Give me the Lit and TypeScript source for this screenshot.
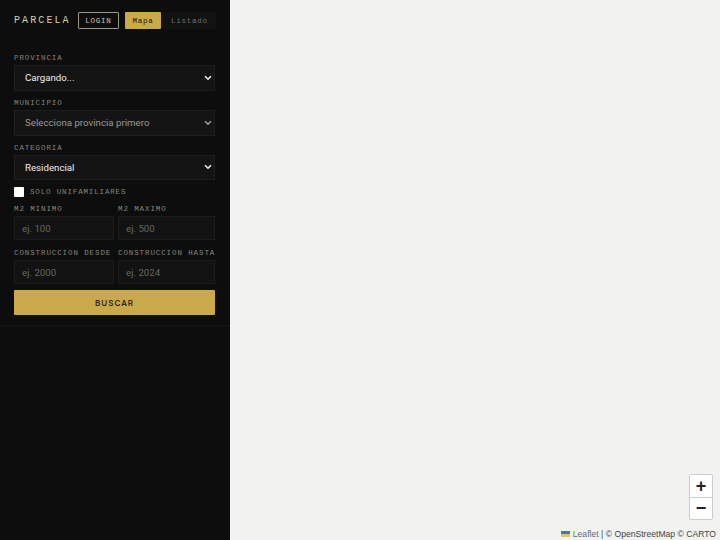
import { LitElement, html, css } from "lit";
import { customElement } from "lit/decorators.js";

@customElement("app-root")
export class AppRoot extends LitElement {
  static styles = css`
    :host { display: flex; width: 720px; height: 540px; overflow: hidden; background: #f2f2f0; }
    * { box-sizing: border-box; }
    .side { width: 230px; height: 540px; background: #0d0d0d; flex: none; display: flex; flex-direction: column; }
    .form { padding: 12px 15px 10px 14px; border-bottom: 1px solid #161616; height: 326px; display: flex; flex-direction: column; }
    .head { display: flex; align-items: center; height: 17px; margin-bottom: 25px; }
    .logo { font: 10px "Liberation Mono", monospace; letter-spacing: 2.1px; color: #d6cda6; width: 64px; flex: none; white-space: nowrap; }
    .btn { height: 17px; display: flex; align-items: center; justify-content: center; font: 7.5px "Liberation Mono", monospace; letter-spacing: .75px; flex: none; }
    .login { width: 41px; border: 1px solid #9a9684; color: #cfc9b0; border-radius: 1px; margin-right: 6px; }
    .mapa { width: 36px; background: #c9a94a; color: #17130a; border-radius: 1px; }
    .list { width: 55px; background: #121212; color: #6f6f68; padding-left: 2px; }
    label { display: block; font: 7.5px "Liberation Mono", monospace; letter-spacing: .9px; color: #86867d; white-space: nowrap; line-height: 9px; }
    select { display: block; width: 100%; height: 26px; appearance: none; background: #141414 url("data:image/svg+xml,%3Csvg xmlns='http://www.w3.org/2000/svg' width='8' height='6' viewBox='0 0 8 6'%3E%3Cpath d='M1 1.2l3 3 3-3' fill='none' stroke='%23eeeeee' stroke-width='1.6'/%3E%3C/svg%3E") no-repeat right 2px center; color: #eeeeee; border: 1px solid #1e1e1e; border-radius: 0; font: 9.7px Roboto, Arial, sans-serif; padding: 0 10px; margin: 2px 0 8px; outline: none; }
    select.dim { color: #9a9a94; background-image: url("data:image/svg+xml,%3Csvg xmlns='http://www.w3.org/2000/svg' width='8' height='6' viewBox='0 0 8 6'%3E%3Cpath d='M1 1.2l3 3 3-3' fill='none' stroke='%239a9a94' stroke-width='1.6'/%3E%3C/svg%3E"); }
    .cat { margin-top: 2px; margin-bottom: 7px; }
    .check { display: flex; align-items: center; gap: 6px; height: 10px; margin: 0 0 8px 0; }
    .check input { width: 10px; height: 10px; margin: 0; appearance: none; background: #fff; border-radius: 1px; flex: none; }
    .check span { font: 7.5px "Liberation Mono", monospace; letter-spacing: .85px; color: #86867d; white-space: nowrap; }
    .grid { display: grid; grid-template-columns: 100px 97px; column-gap: 4px; row-gap: 9px; margin-bottom: 6px; }
    .grid label { margin-bottom: 2px; }
    input.num { display: block; width: 100%; height: 24px; background: #121212; border: 1px solid #1c1c1c; color: #eee; padding: 0 7px; font: 9.7px Roboto, Arial, sans-serif; outline: none; }
    input.num::placeholder { color: #66665f; }
    .go { height: 25px; width: 100%; border: none; background: #c9a94a; color: #17130a; font: 500 8px "Inter", sans-serif; letter-spacing: 1.05px; border-radius: 1px; padding: 1px 0 0; }
    .map { flex: 1; position: relative; }
    .zoom { position: absolute; right: 7px; bottom: 20px; width: 24px; background: #fff; border: 1px solid #ccc; border-radius: 2px; }
    .zoom div { height: 22px; display: flex; align-items: center; justify-content: center; font: bold 18px "Liberation Sans", Arial, sans-serif; color: #222; }
    .zoom div + div { border-top: 1px solid #ccc; }
    .attr { position: absolute; right: 0; bottom: 0; height: 12px; padding: 0 4px; display: flex; align-items: center; gap: 2.5px; font: 8.6px "Liberation Sans", Arial, sans-serif; color: #444; white-space: nowrap; }
    .attr i { color: #5f6f7c; font-style: normal; }
    .attr svg { width: 9px; height: 6px; flex: none; }
  `;

  render() {
    return html`
      <div class="side">
        <div class="form">
          <div class="head">
            <div class="logo">PARCELA</div>
            <div class="btn login">LOGIN</div>
            <div class="btn mapa">Mapa</div>
            <div class="btn list">Listado</div>
          </div>
          <label>PROVINCIA</label>
          <select><option>Cargando...</option></select>
          <label>MUNICIPIO</label>
          <select class="dim"><option>Selecciona provincia primero</option></select>
          <label>CATEGORIA</label>
          <select class="cat"><option>Residencial</option></select>
          <div class="check"><input type="checkbox" /><span>SOLO UNIFAMILIARES</span></div>
          <div class="grid">
            <div><label>M2 MINIMO</label><input class="num" placeholder="ej. 100" /></div>
            <div><label>M2 MAXIMO</label><input class="num" placeholder="ej. 500" /></div>
            <div><label>CONSTRUCCION DESDE</label><input class="num" placeholder="ej. 2000" /></div>
            <div><label>CONSTRUCCION HASTA</label><input class="num" placeholder="ej. 2024" /></div>
          </div>
          <button class="go">BUSCAR</button>
        </div>
      </div>
      <div class="map">
        <div class="zoom"><div>+</div><div>−</div></div>
        <div class="attr">
          <svg viewBox="0 0 9 6"><rect width="9" height="3" fill="#4a6fb8"/><rect y="3" width="9" height="3" fill="#e8c84a"/></svg>
          <i>Leaflet</i> | © OpenStreetMap © CARTO
        </div>
      </div>
    `;
  }
}
